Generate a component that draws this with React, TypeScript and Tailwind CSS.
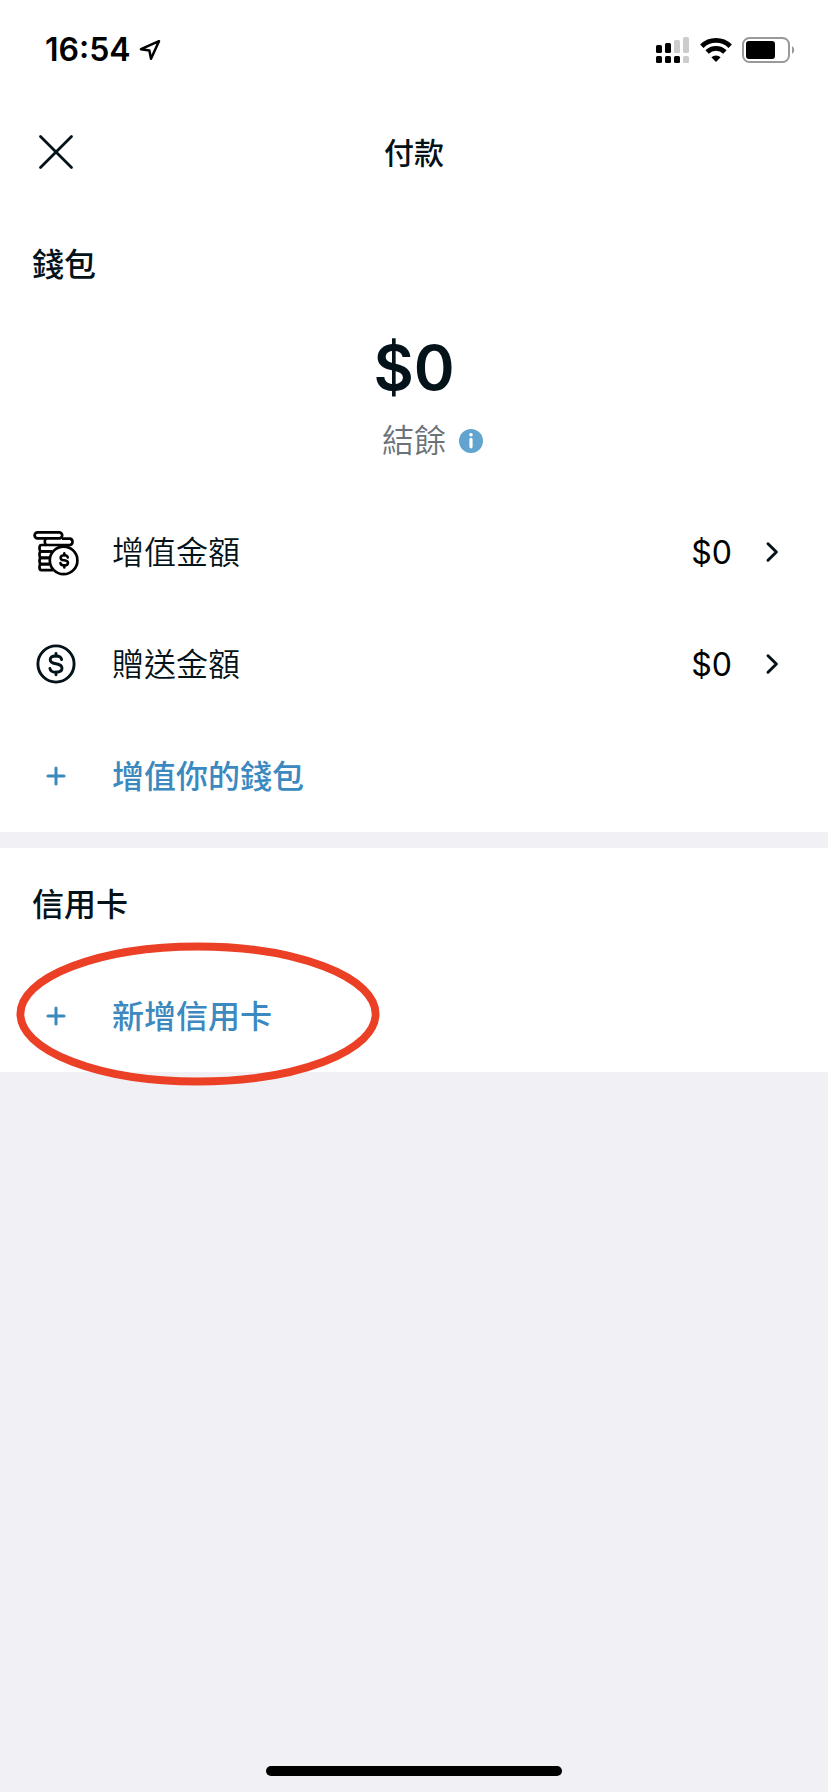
import type { ReactNode } from "react";

function StatusBar() {
  return (
    <div className="flex h-24 items-center justify-between pr-8 pl-[45px] text-black">
      <div className="flex items-center gap-2 pt-1">
        <time className="text-[32px] leading-9 font-semibold">16:54</time>
        <svg width="22" height="24" viewBox="0 0 22 24" fill="none" aria-hidden="true">
          <path
            d="M20 3.2 L2 11.2 L10.4 12.4 L12 20.8 Z"
            stroke="currentColor"
            strokeWidth="2.5"
            strokeLinejoin="round"
          />
        </svg>
      </div>
      <div className="flex items-center gap-[10px] pt-1">
        <svg width="34" height="26" viewBox="0 0 34 26" aria-hidden="true">
          <g fill="#000">
            <rect x="0" y="8" width="6" height="8" rx="1.5" />
            <rect x="9" y="6" width="6" height="10" rx="1.5" />
            <rect x="0" y="19" width="6" height="7" rx="1.5" />
            <rect x="9" y="19" width="6" height="7" rx="1.5" />
            <rect x="18" y="19" width="6" height="7" rx="1.5" />
          </g>
          <g fill="#cccccc">
            <rect x="18" y="3" width="6" height="13" rx="1.5" />
            <rect x="27" y="0" width="6" height="16" rx="1.5" />
            <rect x="27" y="19" width="6" height="7" rx="1.5" />
          </g>
        </svg>
        <svg width="32" height="24" viewBox="0 0 32 24" fill="none" aria-hidden="true">
          <path d="M1.8 8.2 A20.3 20.3 0 0 1 30.2 8.2" stroke="#000" strokeWidth="4.8" />
          <path d="M7.1 14 A12.6 12.6 0 0 1 24.9 14" stroke="#000" strokeWidth="4.8" />
          <path d="M16 24 L11.4 19.3 A6.6 6.6 0 0 1 20.6 19.3 Z" fill="#000" />
        </svg>
        <svg width="54" height="26" viewBox="0 0 54 26" fill="none" aria-hidden="true">
          <rect x="1" y="1" width="46" height="24" rx="6.5" stroke="#999999" strokeWidth="2" />
          <rect x="4" y="4" width="29" height="18" rx="3" fill="#000" />
          <path d="M50 9 A4.6 4.6 0 0 1 50 17 Z" fill="#999999" />
        </svg>
      </div>
    </div>
  );
}

function CoinStackIcon() {
  return (
    <svg width="48" height="48" viewBox="0 0 48 48" fill="none" stroke="#000" strokeWidth="2.7" aria-hidden="true">
      <rect x="2.6" y="4.3" width="27.6" height="6" rx="3" />
      <path d="M14 10.3 C12.4 11.7 12.4 15.4 14 17 H38 A3.3 3.3 0 0 0 38 10.6 H30" />
      <path d="M14 17 H9.5 Q7.5 17 7.5 20 Q7.5 23.4 9.5 23.4 H20" />
      <path d="M20 23.4 H9.5 Q7.5 23.4 7.5 26.5 Q7.5 29.8 9.5 29.8 H17" />
      <path d="M17 29.8 H9.5 Q7.5 29.8 7.5 32.8 Q7.5 36.2 9.5 36.2 H17" />
      <path d="M17 36.2 H9.5 Q7.5 36.2 7.5 39.2 Q7.5 42.2 9.5 42.2 H21" />
      <circle cx="31.6" cy="32.4" r="13.8" fill="#fff" />
      <g strokeWidth="2.5" strokeLinecap="round">
        <path d="M35.8 29.6 Q35.3 27.3 32.4 27.3 Q28.6 27.3 28.6 29.9 Q28.6 31.8 32.2 32.3 Q36 32.8 36 35.1 Q36 37.5 32.4 37.5 Q28.8 37.5 28.4 35" />
        <path d="M32.3 25.2 V27.2 M32.3 37.6 V39.4" />
      </g>
    </svg>
  );
}

function CoinIcon() {
  return (
    <svg width="48" height="48" viewBox="0 0 48 48" fill="none" stroke="#041219" strokeWidth="2.9" aria-hidden="true">
      <circle cx="24" cy="24" r="18.1" />
      <g strokeLinecap="round">
        <path d="M29.6 19.6 Q29 16 24 16 Q18.2 16 18.2 19.8 Q18.2 22.8 23.8 23.8 Q30 24.8 30 28.3 Q30 32.2 24 32.2 Q18.4 32.2 17.9 28.4" />
        <path d="M24 13.4 V16 M24 32.2 V34.8" />
      </g>
    </svg>
  );
}

function PlusIcon() {
  return (
    <svg width="48" height="48" viewBox="0 0 48 48" fill="none" aria-hidden="true">
      <path d="M24 16 V32 M16 24 H32" stroke="currentColor" strokeWidth="3" strokeLinecap="round" />
    </svg>
  );
}

function BalanceRow({ icon, label, amount }: { icon: ReactNode; label: string; amount: string }) {
  return (
    <button type="button" className="flex h-28 w-full items-center pr-10 pl-8 text-left">
      {icon}
      <span className="ml-8 flex-1 pt-px text-[32px] leading-10 font-[350]">{label}</span>
      <span className="pt-px text-[32px] leading-10 text-black">{amount}</span>
      <svg className="ml-6" width="32" height="32" viewBox="0 0 32 32" fill="none" aria-hidden="true">
        <path
          d="M12 7.8 L20.4 16 L12 24.2"
          stroke="#041219"
          strokeWidth="3"
          strokeLinecap="round"
          strokeLinejoin="round"
        />
      </svg>
    </button>
  );
}

function ActionRow({ label }: { label: string }) {
  return (
    <button type="button" className="flex h-28 w-full items-center px-8 text-left text-[#3b89bf]">
      <PlusIcon />
      <span className="ml-8 pt-px text-[32px] leading-10 font-medium">{label}</span>
    </button>
  );
}

function SectionTitle({ children }: { children: ReactNode }) {
  return <h2 className="flex h-28 items-center px-8 pt-px text-[32px] leading-10 font-medium">{children}</h2>;
}

export default function App() {
  return (
    <div className="flex min-h-screen flex-col bg-[#f1f0f5] font-['Inter','Noto_Sans_CJK_TC',sans-serif] text-[#041219]">
      <div className="bg-white">
        <StatusBar />
        <header className="grid h-28 grid-cols-[1fr_auto_1fr] items-center px-8">
          <button type="button" aria-label="關閉" className="justify-self-start">
            <svg width="48" height="48" viewBox="0 0 48 48" fill="none" aria-hidden="true">
              <path d="M8.5 8.5 L39.5 39.5 M39.5 8.5 L8.5 39.5" stroke="#041219" strokeWidth="2.8" strokeLinecap="round" />
            </svg>
          </button>
          <h1 className="pt-px text-[30px] leading-10 font-medium">付款</h1>
        </header>
      </div>

      <main>
        <section className="bg-white">
          <SectionTitle>錢包</SectionTitle>
          <div className="flex h-44 flex-col">
            <p className="text-center text-[62px] leading-[96px] font-semibold">$0</p>
            <div className="grid grid-cols-[1fr_auto_1fr] items-center">
              <span className="col-start-2 pt-px text-[32px] leading-12 font-[350] text-[#6b7378]">結餘</span>
              <button type="button" aria-label="結餘說明" className="ml-3 justify-self-start">
                <svg width="26" height="26" viewBox="0 0 26 26" aria-hidden="true">
                  <circle cx="13" cy="13" r="12" fill="#60a4cf" />
                  <circle cx="13" cy="6.8" r="1.8" fill="#fff" />
                  <rect x="11.4" y="9.8" width="3.2" height="10.6" rx="1.6" fill="#fff" />
                </svg>
              </button>
            </div>
          </div>
          <BalanceRow icon={<CoinStackIcon />} label="增值金額" amount="$0" />
          <BalanceRow icon={<CoinIcon />} label="贈送金額" amount="$0" />
          <ActionRow label="增值你的錢包" />
        </section>

        <section className="mt-4 bg-white">
          <SectionTitle>信用卡</SectionTitle>
          <div className="relative">
            <ActionRow label="新增信用卡" />
            <svg
              className="pointer-events-none absolute -top-[18px] left-4"
              width="364"
              height="144"
              viewBox="0 0 364 144"
              fill="none"
              aria-hidden="true"
            >
              <ellipse cx="182" cy="72" rx="177.6" ry="67.5" stroke="#eb4025" strokeWidth="7.8" />
            </svg>
          </div>
        </section>
      </main>

      <footer className="mt-auto flex justify-center pt-6 pb-4">
        <div className="h-[10px] w-[296px] rounded-full bg-black" />
      </footer>
    </div>
  );
}
